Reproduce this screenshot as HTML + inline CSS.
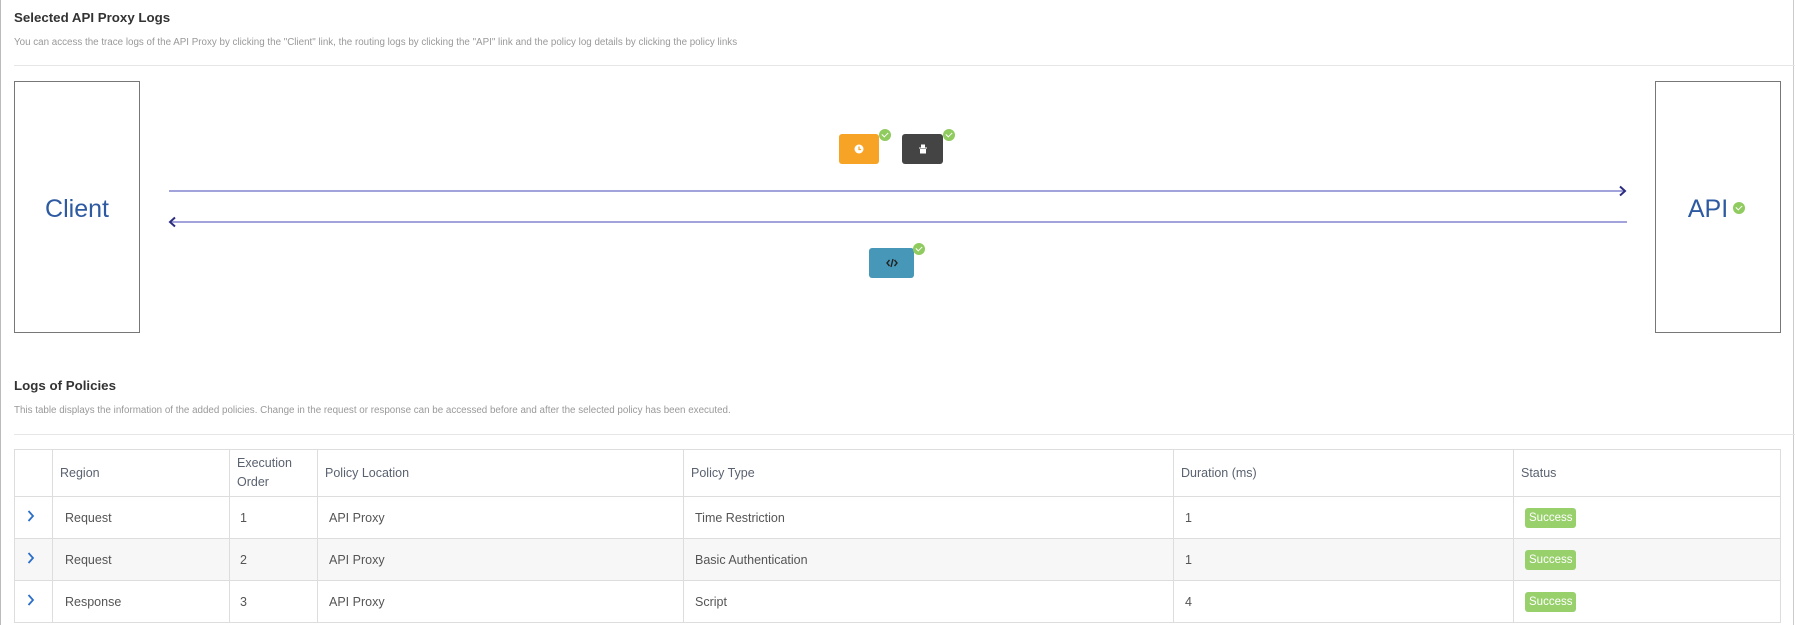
<!DOCTYPE html>
<html><head><meta charset="utf-8"><style>
*{box-sizing:border-box;margin:0;padding:0}
body{width:1795px;height:625px;background:#fff;font-family:"Liberation Sans",sans-serif;position:relative;overflow:hidden;color:#555}
.a{position:absolute}
h1{position:absolute;left:14px;font-size:13.3px;font-weight:bold;color:#333}
.sub{position:absolute;left:14px;font-size:9.8px;color:#999}
.hr{position:absolute;left:14px;right:0;height:1px;background:#e6e6e6}
.box{position:absolute;top:81px;width:126px;height:252px;border:1px solid #777;color:#2d5aa0;font-size:25px;display:flex;align-items:center;justify-content:center;padding-top:4px}
.btn{position:absolute;border-radius:3px;display:flex;align-items:center;justify-content:center}
.chk{position:absolute;width:12px;height:12px;border-radius:50%;background:#8fcb5f}
.chk:after{content:"";position:absolute;left:3px;top:2.5px;width:5px;height:3px;border-left:1.6px solid #fff;border-bottom:1.6px solid #fff;transform:rotate(-45deg)}
table{position:absolute;left:14px;top:449px;width:1767px;border-collapse:collapse;font-size:12.5px}
td,th{border:1px solid #ddd;text-align:left;font-weight:normal;padding:0 7px;color:#555}
th{height:47px;color:#5a6270;font-size:12.5px;line-height:19px}
td{height:42px}
tr.g td{background:#f7f7f7}
.chev{padding-left:12px}
.bd{display:inline-block;background:#98d06c;color:#fff;font-size:11.5px;border-radius:3px;padding:4px 4px}
</style></head><body>
<div class="a" style="left:0;top:0;width:1px;height:625px;background:#bbb"></div>
<div class="a" style="left:1793px;top:0;width:1px;height:625px;background:#ccc"></div>
<h1 style="top:10px">Selected API Proxy Logs</h1>
<div class="sub" style="top:37px">You can access the trace logs of the API Proxy by clicking the "Client" link, the routing logs by clicking the "API" link and the policy log details by clicking the policy links</div>
<div class="hr" style="top:65px"></div>
<div class="box" style="left:14px">Client</div>
<div class="box" style="left:1655px;padding-right:20px">API</div>
<div class="chk" style="left:1733px;top:202px"></div>
<div class="a" style="left:169px;top:190px;width:1456px;height:2px;background:#a3a3dc"></div>
<svg class="a" style="left:1618px;top:185px" width="10" height="12"><path d="M2 1.5 L7 6 L2 10.5" stroke="#2d2d80" stroke-width="2" fill="none"/></svg>
<div class="a" style="left:171px;top:221px;width:1456px;height:2px;background:#a3a3dc"></div>
<svg class="a" style="left:168px;top:216px" width="10" height="12"><path d="M7 1.5 L2 6 L7 10.5" stroke="#2d2d80" stroke-width="2" fill="none"/></svg>
<div class="btn" style="left:839px;top:134px;width:40px;height:30px;background:#f7a325"><svg width="10" height="10"><circle cx="5" cy="5" r="4.5" fill="#fff"/><path d="M5 2.5V5.5H7" stroke="#f7a325" stroke-width="1.2" fill="none"/></svg></div>
<div class="chk" style="left:879px;top:129px"></div>
<div class="btn" style="left:902px;top:134px;width:41px;height:30px;background:#444"><svg width="10" height="10"><rect x="3" y="0.5" width="4" height="3" fill="#fff"/><rect x="1" y="3.5" width="8" height="1" fill="#fff"/><rect x="2" y="5" width="6" height="4.5" fill="#fff"/></svg></div>
<div class="chk" style="left:943px;top:129px"></div>
<div class="btn" style="left:869px;top:248px;width:45px;height:30px;background:#4797b8"><svg width="12" height="10"><path d="M3.5 2L1 5l2.5 3M8.5 2L11 5 8.5 8M7 1L5 9" stroke="#222" stroke-width="1.4" fill="none"/></svg></div>
<div class="chk" style="left:913px;top:243px"></div>
<h1 style="top:378px">Logs of Policies</h1>
<div class="sub" style="top:405px">This table displays the information of the added policies. Change in the request or response can be accessed before and after the selected policy has been executed.</div>
<div class="hr" style="top:434px"></div>
<table>
<tr><th style="width:38px"></th><th style="width:177px">Region</th><th style="width:88px">Execution<br>Order</th><th style="width:366px">Policy Location</th><th style="width:490px">Policy Type</th><th style="width:340px">Duration (ms)</th><th>Status</th></tr>
<tr><td class="chev"><svg width="8" height="12"><path d="M1.5 1L6 6 1.5 11" stroke="#2c6fca" stroke-width="1.8" fill="none"/></svg></td><td style="padding-left:12px">Request</td><td style="padding-left:10px">1</td><td style="padding-left:11px">API Proxy</td><td style="padding-left:11px">Time Restriction</td><td style="padding-left:11px">1</td><td style="padding-left:11px"><span class="bd">Success</span></td></tr>
<tr class="g"><td class="chev"><svg width="8" height="12"><path d="M1.5 1L6 6 1.5 11" stroke="#2c6fca" stroke-width="1.8" fill="none"/></svg></td><td style="padding-left:12px">Request</td><td style="padding-left:10px">2</td><td style="padding-left:11px">API Proxy</td><td style="padding-left:11px">Basic Authentication</td><td style="padding-left:11px">1</td><td style="padding-left:11px"><span class="bd">Success</span></td></tr>
<tr><td class="chev"><svg width="8" height="12"><path d="M1.5 1L6 6 1.5 11" stroke="#2c6fca" stroke-width="1.8" fill="none"/></svg></td><td style="padding-left:12px">Response</td><td style="padding-left:10px">3</td><td style="padding-left:11px">API Proxy</td><td style="padding-left:11px">Script</td><td style="padding-left:11px">4</td><td style="padding-left:11px"><span class="bd">Success</span></td></tr>
</table>
</body></html>
